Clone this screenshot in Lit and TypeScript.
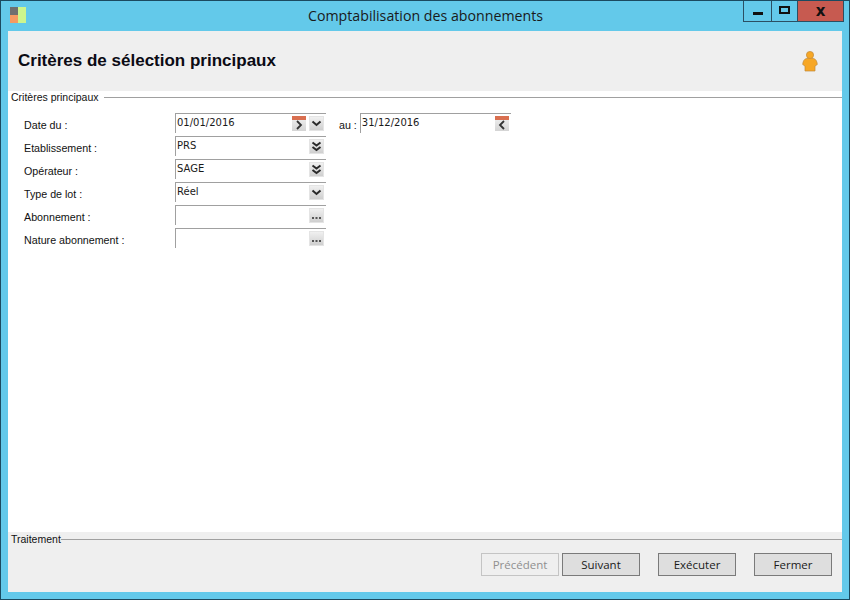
import { LitElement, html, css, svg } from "lit";
import { customElement } from "lit/decorators.js";

const chevron = (double: boolean) => html`<svg width="11" height="11" viewBox="0 0 11 11" fill="none" stroke="#2a2a2a" stroke-width="2">
  ${double
    ? svg`<path d="M1.500 1.500l4 3 4-3M1.500 6l4 3 4-3"/>`
    : svg`<path d="M1.500 3.500l4 3.500 4-3.500"/>`}
</svg>`;

const cal = (dir: "r" | "l") => html`<span class="cal">
  <span class="calbar"></span>
  <svg width="14" height="10" viewBox="0 0 14 10" fill="none" stroke="#333" stroke-width="1.800">
    ${dir === "r" ? svg`<path d="M5 1l4 4-4 4"/>` : svg`<path d="M9 1L5 5l4 4"/>`}
  </svg>
</span>`;

const btn = (kind: "one" | "two" | "dots") => html`<span class="ib ${kind === "dots" ? "dots" : ""}">
  ${kind === "dots" ? html`<svg width="11" height="4" viewBox="0 0 11 4" fill="#555"><rect x="1" y="1" width="2" height="2"/><rect x="4.500" y="1" width="2" height="2"/><rect x="8" y="1" width="2" height="2"/></svg>` : chevron(kind === "two")}
</span>`;

@customElement("app-root")
export class AppRoot extends LitElement {
  static styles = css`
    :host { display: block; width: 850px; height: 600px; overflow: hidden; }
    .win { box-sizing: border-box; width: 850px; height: 600px; background: #63c9ea; border: 1px solid #1b4a60; display: flex; flex-direction: column; padding-bottom: 7px; font-family: "Liberation Sans", sans-serif; color: #111; }
    .title { height: 30px; flex: none; display: flex; align-items: flex-start; padding-left: 9px; box-sizing: border-box; }
    .logo { width: 16px; height: 16px; margin-top: 6px; flex: none; display: block; }
    .ttl { flex: 1; text-align: center; font: 14.2px/30px "Open Sans", sans-serif; color: #1a1a1a; padding-left: 82px; }
    .ctrls { display: flex; height: 21px; margin-right: 5px; border: 1px solid #2b4f63; border-top: none; box-sizing: border-box; }
    .c { display: flex; align-items: center; justify-content: center; }
    .c.min { width: 27px; border-right: 1px solid #2b4f63; }
    .c.max { width: 25px; border-right: 1px solid #2b4f63; }
    .c.cl { width: 45px; background: #c75a50; font: bold 15px "DejaVu Sans", sans-serif; color: #111; }
    .minb { width: 10px; height: 3px; background: #111; margin-top: 5px; }
    .maxb { width: 7px; height: 4px; border: 2px solid #111; margin-top: -2px; }
    .client { flex: 1; min-height: 0; margin: 0 7px; display: flex; flex-direction: column; background: #fff; }
    .head { height: 60px; flex: none; background: #efefef; display: flex; align-items: center; justify-content: space-between; padding: 0 24px 0 10px; }
    .head h1 { margin: 0; font: bold 17px "Liberation Sans", sans-serif; color: #0b0b14; }
    .head svg { margin-top: 1px; }
    .main { flex: 1; min-height: 0; }
    .legend { display: flex; align-items: center; font-size: 10.5px; height: 12px; padding-left: 3px; }
    .legend .line { flex: 1; height: 1px; background: #a0a0a0; margin-left: 5px; margin-top: 1px; }
    .form { display: grid; grid-template-columns: 151px 151px auto; grid-auto-rows: 23px; padding: 10px 0 0 16px; justify-content: start; }
    .lab { line-height: 24px; font-size: 10.7px; }
    .f { box-sizing: border-box; height: 20px; width: 151px; border-top: 1px solid #a0a0a0; border-left: 1px solid #a0a0a0; display: flex; align-items: flex-start; font: 10px/18px "DejaVu Sans", sans-serif; padding-left: 1px; color: #1a1a1a; }
    .f .v { flex: 1; }
    .f .icons { display: flex; gap: 3px; margin-top: 2px; margin-right: 2px; }
    .ib { width: 15px; height: 15px; box-sizing: border-box; background: linear-gradient(#f0f0f0, #cfcfcf); border: 1px solid #e4e4e4; display: flex; align-items: center; justify-content: center; }
    .ib.dots { align-items: flex-end; padding-bottom: 2px; }
    .cal { width: 14px; height: 15px; display: flex; flex-direction: column; background: linear-gradient(#f2f2f2, #d4d4d4); }
    .calbar { height: 4px; background: #d96f50; flex: none; }
    .au { display: flex; gap: 3px; align-items: flex-start; padding-left: 13px; grid-column: 3; grid-row: 1; }
    .au span.t { font-size: 10.7px; line-height: 24px; }
    .foot { height: 60px; flex: none; background: #efefef; display: flex; flex-direction: column; }
    .foot .legend { height: 14px; padding-left: 3px; }
    .foot .legend .line { margin-left: 0; }
    .btns { display: flex; justify-content: flex-end; padding: 7px 10px 0 0; }
    .b { box-sizing: border-box; width: 78px; height: 23px; border: 1px solid #7a7a7a; background: #dedede; text-align: center; font: 11.5px/21px "Open Sans", sans-serif; color: #1a1a1a; }
    .b.dis { border-color: #c4c4c4; background: #efefef; color: #8f8f8f; margin-right: 3px; }
    .b.gap { margin-left: 18px; }
  `;

  render() {
    return html`<div class="win">
      <div class="title">
        <svg class="logo" viewBox="0 0 16 16"><rect x="0" y="0" width="8" height="8" fill="#6f6f6f"/><rect x="0" y="8" width="8" height="8" fill="#f59a62"/><rect x="8" y="0" width="8" height="16" fill="#cdf58d"/></svg>
        <div class="ttl">Comptabilisation des abonnements</div>
        <div class="ctrls">
          <div class="c min"><div class="minb"></div></div>
          <div class="c max"><div class="maxb"></div></div>
          <div class="c cl">x</div>
        </div>
      </div>
      <div class="client">
        <div class="head">
          <h1>Critères de sélection principaux</h1>
          <svg width="16" height="21" viewBox="0 0 16 21" fill="#f7a725" stroke="#c08a3a" stroke-width=".7"><path d="M4.500 7.500C2.200 8 1 10 .7 13.500L3 15v5h10v-5l2.300-1.500C15 10 13.800 8 11.500 7.500z"/><circle cx="8" cy="4" r="3.600"/><path d="M4.800 7.800h6.400V11H4.800z" stroke="none"/></svg>
        </div>
        <div class="main">
          <div class="legend">Critères principaux<span class="line"></span></div>
          <div class="form">
            <div class="lab">Date du :</div>
            <div class="f"><span class="v">01/01/2016</span><span class="icons">${cal("r")}${btn("one")}</span></div>
            <div class="au"><span class="t">au :</span><div class="f"><span class="v">31/12/2016</span><span class="icons">${cal("l")}</span></div></div>
            <div class="lab">Etablissement :</div>
            <div class="f"><span class="v">PRS</span><span class="icons">${btn("two")}</span></div><div></div>
            <div class="lab">Opérateur :</div>
            <div class="f"><span class="v">SAGE</span><span class="icons">${btn("two")}</span></div><div></div>
            <div class="lab">Type de lot :</div>
            <div class="f"><span class="v">Réel</span><span class="icons">${btn("one")}</span></div><div></div>
            <div class="lab">Abonnement :</div>
            <div class="f"><span class="v"></span><span class="icons">${btn("dots")}</span></div><div></div>
            <div class="lab">Nature abonnement :</div>
            <div class="f"><span class="v"></span><span class="icons">${btn("dots")}</span></div><div></div>
          </div>
        </div>
        <div class="foot">
          <div class="legend">Traitement<span class="line"></span></div>
          <div class="btns">
            <div class="b dis">Précédent</div>
            <div class="b">Suivant</div>
            <div class="b gap">Exécuter</div>
            <div class="b gap">Fermer</div>
          </div>
        </div>
      </div>
    </div>`;
  }
}
